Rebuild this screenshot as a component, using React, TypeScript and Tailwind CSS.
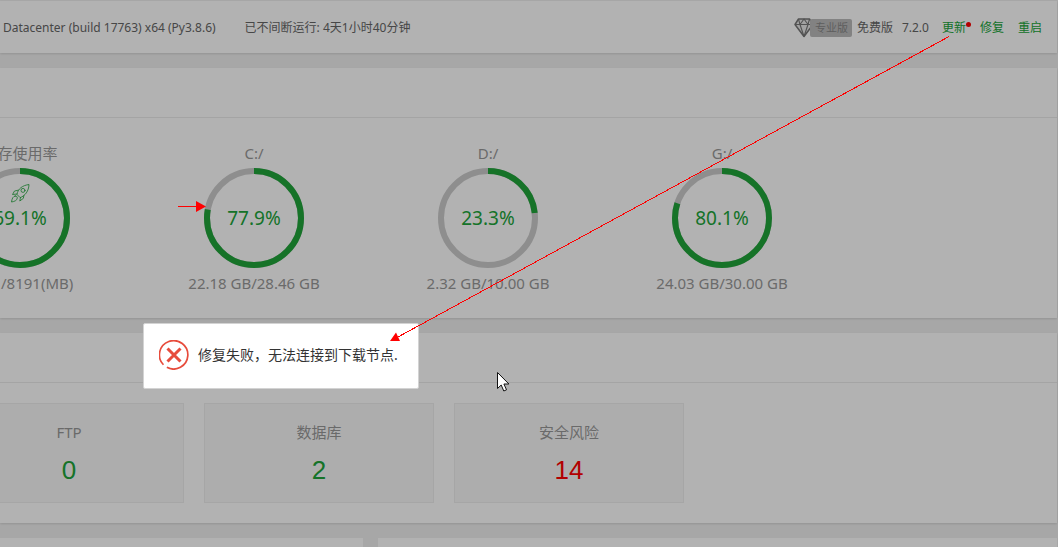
type Gauge = {
  label: string;
  percent: number;
  detail: string;
  rocket?: boolean;
};

const gauges: Gauge[] = [
  { label: '内存使用率', percent: 69.1, detail: '5661/8191(MB)', rocket: true },
  { label: 'C:/', percent: 77.9, detail: '22.18 GB/28.46 GB' },
  { label: 'D:/', percent: 23.3, detail: '2.32 GB/10.00 GB' },
  { label: 'G:/', percent: 80.1, detail: '24.03 GB/30.00 GB' },
];

const stats = [
  { label: 'FTP', value: 0, tone: 'text-[#20a53a]' },
  { label: '数据库', value: 2, tone: 'text-[#20a53a]' },
  { label: '安全风险', value: 14, tone: 'text-[#ff0000]' },
];

function Diamond() {
  return (
    <svg
      className="h-5 w-5 shrink-0"
      viewBox="0 0 20 20"
      fill="none"
      stroke="#777"
      strokeWidth="1.5"
      strokeLinejoin="round"
      aria-hidden="true"
    >
      <path d="M4.5 1h11L19 6.5 10 18.5 1 6.5z" fill="#e8e8e8" />
      <path d="M1 6.500h18M6 6.500l4 12 4-12M4.500 1L6 6.500 10 1l4 5.500L15.500 1" strokeWidth="1.100" />
    </svg>
  );
}

function Rocket() {
  return (
    <svg
      className="h-5 w-5"
      viewBox="0 0 20 20"
      fill="none"
      stroke="#20a53a"
      strokeWidth="0.8"
      strokeLinejoin="round"
      strokeLinecap="round"
      aria-hidden="true"
    >
      <path d="M7 11C8 6 12 2.500 19 1.500 18.800 8 15 13 10.500 14.500z" />
      <circle cx="13" cy="7.400" r="2" />
      <path d="M8.200 7.200L4.500 8 2.500 11.500 7 11M13.800 12.600L13.400 15.300 9.800 18 10.500 14.500" />
      <path d="M5.200 13C3 13.300 2 15.500 1.500 19 4.500 18.500 7 17.500 7.300 15 7.300 13.700 6.500 12.800 5.200 13z" />
    </svg>
  );
}

function GaugeItem({ label, percent, detail, rocket }: Gauge) {
  return (
    <div className="flex w-[234px] shrink-0 flex-col items-center text-[15px] leading-5 text-[#999]">
      <h3 className="whitespace-nowrap">{label}</h3>
      <div className="my-1 grid h-[102px] w-25 place-items-center">
        <svg className="col-start-1 row-start-1 h-25 w-25" viewBox="0 0 100 100" fill="none" strokeWidth="6">
          <circle cx="50" cy="50" r="47" stroke="#ccc" />
          <circle
            cx="50"
            cy="50"
            r="47"
            stroke="#20a53a"
            pathLength="100"
            strokeDasharray={`${percent} 100`}
            transform="rotate(-90 50 50)"
          />
        </svg>
        {rocket && (
          <span className="col-start-1 row-start-1 self-start pt-4">
            <Rocket />
          </span>
        )}
        <span className="col-start-1 row-start-1 text-[19px] text-[#20a53a]">{percent}%</span>
      </div>
      <p className="whitespace-nowrap">{detail}</p>
    </div>
  );
}

export default function App() {
  return (
    <div className="relative min-h-screen overflow-hidden bg-[#f0f0f0] font-['Noto_Sans','Noto_Sans_CJK_SC',sans-serif]">
      <main className="flex min-h-screen flex-col gap-[15px] pt-px pr-px">
        <header className="flex h-[52px] items-center justify-between bg-white pt-0.5 pr-[15px] pl-[3px] text-xs text-[#666] shadow-[0_1px_2px_rgba(0,0,0,0.12)]">
          <div className="flex gap-[29px] whitespace-nowrap">
            <span>Datacenter (build 17763) x64 (Py3.8.6)</span>
            <span>已不间断运行: 4天1小时40分钟</span>
          </div>
          <div className="flex items-center whitespace-nowrap">
            <div className="flex items-center">
              <Diamond />
              <span className="-ml-1 h-[18px] rounded-xs bg-[#bbb] pr-1 pl-[5px] text-[11px] leading-[18px] text-[#888]">
                专业版
              </span>
            </div>
            <span className="ml-[5px]">免费版</span>
            <span className="ml-[9px]">7.2.0</span>
            <nav className="ml-[13px] flex gap-[14px] text-[#20a53a]">
              <a href="#update" className="relative">
                更新
                <span className="absolute top-0.5 -right-[5px] h-[5px] w-[5px] rounded-full bg-[#ff0000]" />
              </a>
              <a href="#repair">修复</a>
              <a href="#restart">重启</a>
            </nav>
          </div>
        </header>

        <section className="bg-white pb-[25px] shadow-[0_1px_2px_rgba(0,0,0,0.12)]">
          <div className="h-[50px] border-b border-[#ebebeb]" />
          <div className="-ml-[97px] flex pt-[25px]">
            {gauges.map((g) => (
              <GaugeItem key={g.label} {...g} />
            ))}
          </div>
        </section>

        <section className="bg-white pb-5 shadow-[0_1px_2px_rgba(0,0,0,0.12)]">
          <div className="h-[50px] border-b border-[#ebebeb]" />
          <ul className="-ml-[46px] flex gap-5 pt-5">
            {stats.map((s) => (
              <li
                key={s.label}
                className="flex h-25 w-[230px] shrink-0 flex-col items-center border border-[#eee] bg-[#f8f8f8] pt-[18px]"
              >
                <span className="text-[15px] leading-5 text-[#999]">{s.label}</span>
                <a
                  href="#detail"
                  className={`mt-2 font-['Liberation_Sans',sans-serif] text-[26px] leading-10 ${s.tone}`}
                >
                  {s.value}
                </a>
              </li>
            ))}
          </ul>
        </section>

        <div className="flex flex-1 gap-[15px]">
          <section className="w-[363px] bg-white" />
          <section className="flex-1 bg-white" />
        </div>
      </main>

      <div className="absolute inset-0 bg-black/30" />

      <div
        role="alertdialog"
        aria-labelledby="message"
        className="absolute top-[323px] left-[143px] flex h-[66px] w-[276px] items-center gap-[9px] rounded-xs border border-[#d3d3d3] bg-white pb-0.5 pl-[15px]"
      >
        <svg className="h-[30px] w-[30px] shrink-0" viewBox="0 0 30 30" fill="none" stroke="#e74c3c" aria-hidden="true">
          <path d="M3.800 24A14.200 14.200 0 1 1 7 26.800" strokeWidth="1.700" transform="rotate(-4 15 15)" />
          <path d="M8.500 8.500l13 13M21.500 8.500l-13 13" strokeWidth="3" />
        </svg>
        <p id="message" className="text-sm whitespace-nowrap text-[#333]">
          修复失败，无法连接到下载节点.
        </p>
      </div>

      <svg
        className="pointer-events-none absolute top-0 left-0 h-[547px] w-[1058px]"
        viewBox="0 0 1058 547"
        aria-hidden="true"
      >
        <g stroke="#ff0000" shapeRendering="crispEdges">
          <path d="M949 36.500L398 337M178 206.500h18" />
        </g>
        <path d="M390 341l6-8.500 4 8.500zM196 201l10 5.500-10 5.500z" fill="#ff0000" />
        <path
          d="M497.500 372.500v16l3.700-3.500 2.600 6 2.700-1.200-2.600-5.800h5z"
          fill="#fff"
          stroke="#111"
          strokeLinejoin="round"
        />
      </svg>
    </div>
  );
}
